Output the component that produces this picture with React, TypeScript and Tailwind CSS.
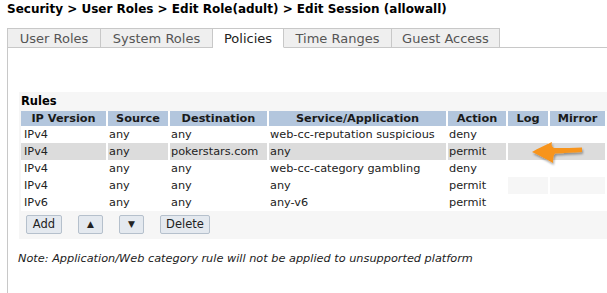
import React from "react";

const cols = ["IP Version", "Source", "Destination", "Service/Application", "Action", "Log", "Mirror", ""];
const rows = [
  ["IPv4", "any", "any", "web-cc-reputation suspicious", "deny", "white"],
  ["IPv4", "any", "pokerstars.com", "any", "permit", "gray"],
  ["IPv4", "any", "any", "web-cc-category gambling", "deny", "white"],
  ["IPv4", "any", "any", "any", "permit", "faint"],
  ["IPv6", "any", "any", "any-v6", "permit", "white"],
];

const tabs = ["User Roles", "System Roles", "Policies", "Time Ranges", "Guest Access"];
const tabW = ["w-[93px]", "w-[112px]", "w-[71px]", "w-[108px]", "w-[108px]"];

export default function App() {
  return (
    <div className="relative w-[607px] h-[293px] overflow-hidden bg-white text-[#222] font-['DejaVu_Sans',Verdana,sans-serif]">
      <div className="h-[28px] pl-[7px] pt-[1px] text-[12px] font-bold leading-[16px] text-black whitespace-nowrap">
        Security &gt; User Roles &gt; Edit Role(adult) &gt; Edit Session (allowall)
      </div>
      <div className="ml-[7px] border-l border-[#c8c8c8] h-[265px]">
        <div className="flex h-[20px]">
          {tabs.map((t, i) => {
            const active = t === "Policies";
            return (
              <div
                key={t}
                className={`${tabW[i]} shrink-0 flex items-center justify-center border-t border-r border-[#c8c8c8] text-[13px] leading-none ${
                  active ? "bg-white text-[#222] border-b border-b-white" : "bg-[#efefef] text-[#555] border-b"
                }`}
              >
                {t}
              </div>
            );
          })}
          <div className="flex-1 border-b border-[#c8c8c8]" />
        </div>
        <div className="pl-[11px] pt-[44px]">
          <div className="bg-[#f6f6f6] w-[700px] pl-[2px] pb-[5px]">
            <div className="h-[19px] flex items-center text-[11.5px] font-bold text-black">Rules</div>
            <div className="grid grid-cols-[85px_60px_97px_177px_58px_40px_55px_80px] gap-x-[2px] text-[11.3px] leading-none bg-white">
              {cols.map((c, i) => (
                <div key={i} className="h-[15px] bg-[#b3c6dd] flex items-center justify-center font-bold text-[#1a1a1a]">
                  {c}
                </div>
              ))}
            </div>
            {rows.map((r, ri) => (
              <div
                key={ri}
                className="grid grid-cols-[85px_60px_97px_177px_58px_40px_55px_80px] gap-x-[2px] text-[11.3px] leading-none bg-white"
              >
                {r.slice(0, 5).map((c, ci) => (
                  <div
                    key={ci}
                    className={`h-[17px] flex items-center ${ci === 0 ? "pl-[3px]" : "pl-[1px]"} ${
                      r[5] === "gray" ? "bg-[#dcdcdc]" : "bg-white"
                    } whitespace-nowrap`}
                  >
                    {c}
                  </div>
                ))}
                {[0, 1, 2].map((k) => (
                  <div
                    key={k}
                    className={`h-[17px] ${
                      r[5] === "gray" ? "bg-[#dcdcdc]" : r[5] === "faint" ? "bg-[#f6f6f6]" : "bg-white"
                    }`}
                  />
                ))}
              </div>
            ))}
            <div className="flex gap-[16px] pl-[5px] pt-[4px] text-[11.5px]">
              <button className="w-[36px] h-[19px] rounded-[2px] border border-[#b5c0cc] bg-[#e4e9ef] flex items-center justify-center text-[#222]">
                Add
              </button>
              <button className="w-[25px] h-[19px] rounded-[2px] border border-[#b5c0cc] bg-[#e4e9ef] flex items-center justify-center text-[#222] text-[9px]">
                ▲
              </button>
              <button className="w-[25px] h-[19px] rounded-[2px] border border-[#b5c0cc] bg-[#e4e9ef] flex items-center justify-center text-[#222] text-[9px]">
                ▼
              </button>
              <button className="w-[50px] h-[19px] rounded-[2px] border border-[#b5c0cc] bg-[#e4e9ef] flex items-center justify-center text-[#222]">
                Delete
              </button>
            </div>
          </div>
        </div>
        <div className="pl-[10px] pt-[12px] text-[11.3px] italic text-[#222] whitespace-nowrap">
          Note: Application/Web category rule will not be applied to unsupported platform
        </div>
      </div>
      <svg className="absolute left-[526px] top-[138px]" width="64" height="32" viewBox="0 0 64 32">
        <defs>
          <filter id="sh" x="-20%" y="-30%" width="150%" height="170%">
            <feDropShadow dx="1" dy="2" stdDeviation="1.2" floodColor="#000" floodOpacity="0.35" />
          </filter>
        </defs>
        <path
          d="M6 14 C12 10 20 7 26 4 C25 7 26 9 28 10 C38 10 48 10 56 9.5 C56 11 56 12.5 56 14 C46 14.5 38 15 29 15.5 C27 18 27 22 27 25 C20 21 13 17 6 14 Z"
          fill="#f7941d"
          filter="url(#sh)"
        />
      </svg>
    </div>
  );
}
